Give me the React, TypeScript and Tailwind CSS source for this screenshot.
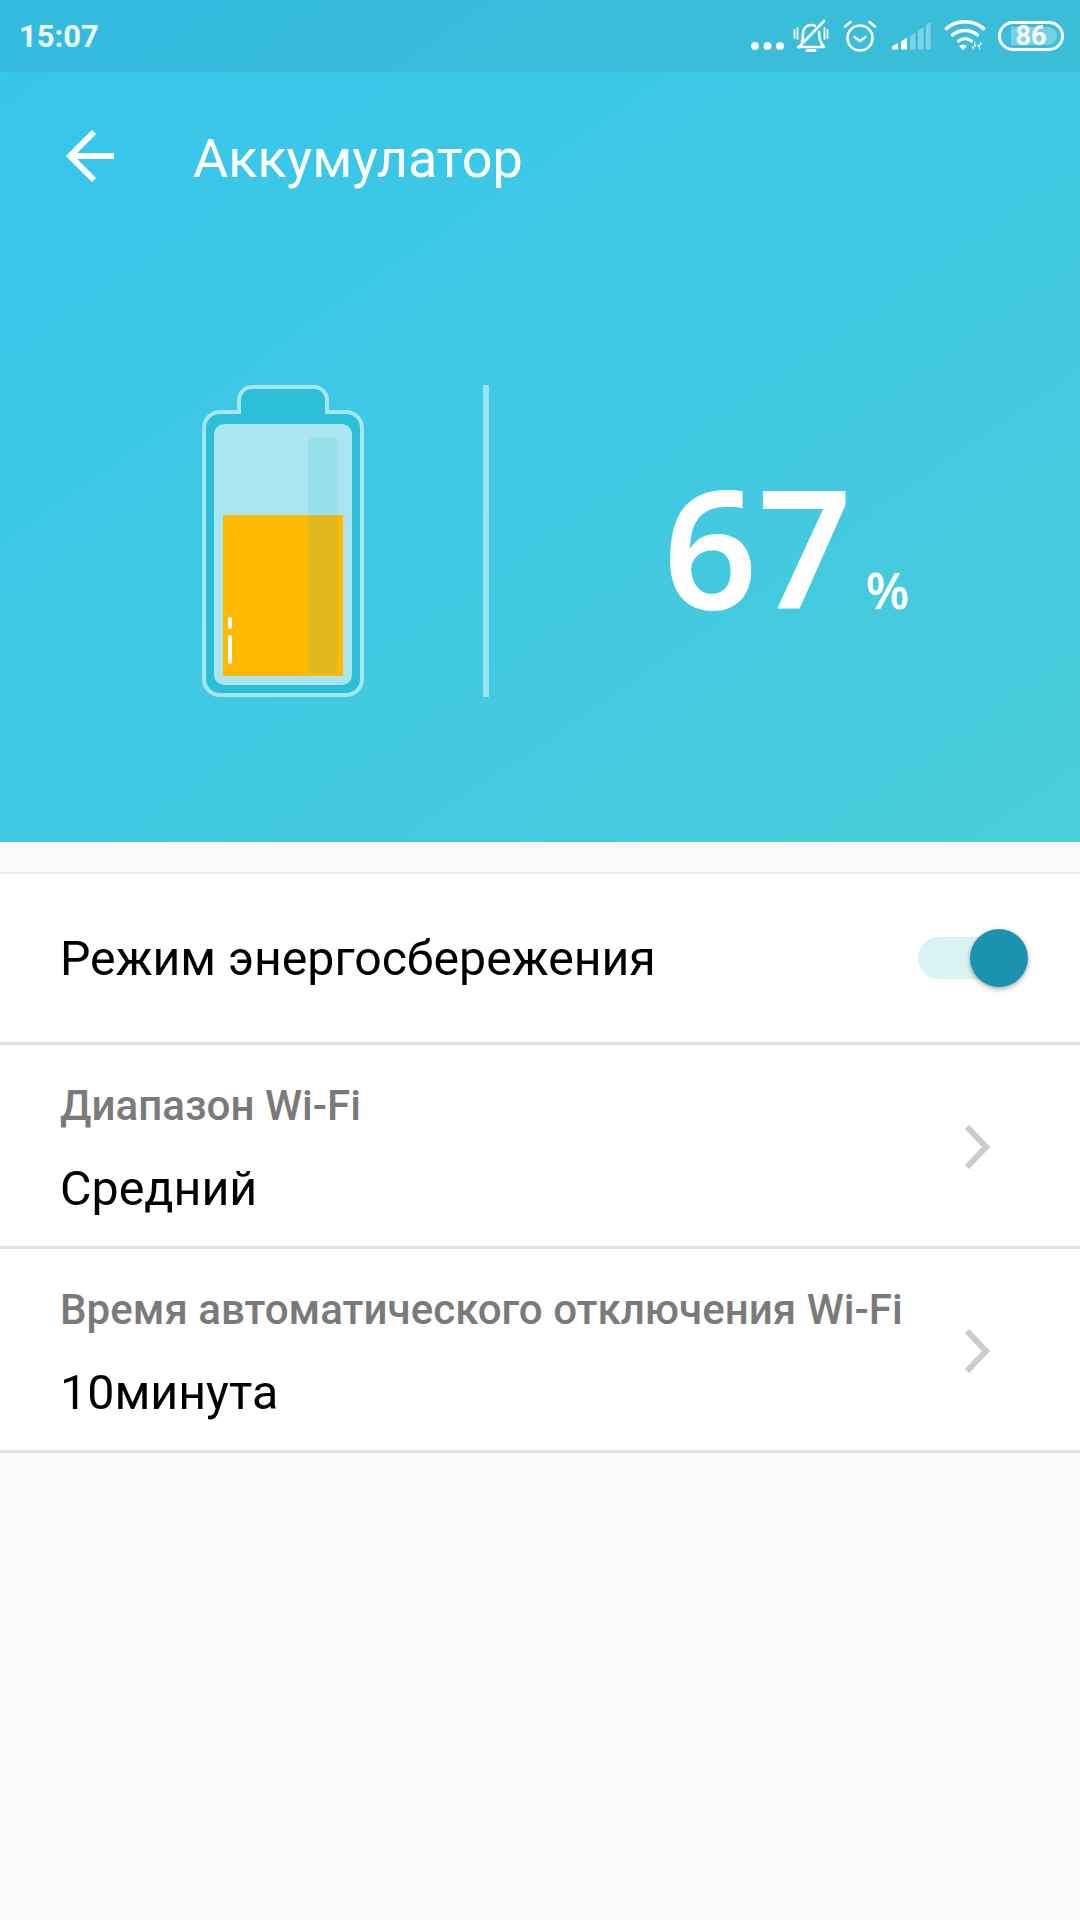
export default function App() {
  const f = { fontFamily: 'Roboto, sans-serif' };
  return (
    <div className="w-[1080px] h-[1920px] bg-[#fafafa] overflow-hidden font-['Roboto',sans-serif]" style={f}>
      <div className="h-[842px] bg-[linear-gradient(145deg,#36c5ec_0%,#3fc9e4_50%,#4bccd9_100%)]">
        <div className="h-[72px] bg-black/[0.05] flex items-center text-white">
          <span className="ml-[19px] text-[31px] font-bold leading-none text-white/90 mt-[1px]">15:07</span>
          <div className="ml-auto mr-[16px] h-[72px] flex items-center">
            <svg width="34" height="16" viewBox="0 0 34 16" className="mt-[19px] mr-[8px]">
              <circle cx="4" cy="8" r="4" fill="#fff" opacity="0.95" />
              <circle cx="16.5" cy="8" r="4" fill="#fff" opacity="0.95" />
              <circle cx="29" cy="8" r="4" fill="#fff" opacity="0.95" />
            </svg>
            <svg width="36" height="34" viewBox="0 0 36 34" fill="none" stroke="#fff" strokeWidth="2.6" strokeLinecap="round" strokeLinejoin="round" className="mr-[13px]">
              <path d="M6 28l25-26" />
              <path d="M9 23c1-3 1-6 1-9 0-5 4-8 8-8 2 0 3 0 4 1M26 13c0 4 1 11 5 15H5" />
              <path d="M14 31.5h8" strokeWidth="2.8" />
              <path d="M1.500 11v8M4.500 9v11M31.500 9v11M34.500 11v8" strokeWidth="1.800" />
            </svg>
            <svg width="36" height="34" viewBox="0 0 36 34" fill="none" stroke="#fff" strokeWidth="2.6" strokeLinecap="round" strokeLinejoin="round" className="mr-[13px]">
              <circle cx="18" cy="19" r="12.5" />
              <path d="M12.5 18l5.5 4 5.5-4" />
              <path d="M3 7.5l5.5-4.500M33 7.5l-5.5-4.500" />
            </svg>
            <svg width="40" height="28" viewBox="0 0 40 28" className="mr-[13px]">
              <path d="M1 27.500v-3l6-3.500v6.500z" fill="#fff" />
              <path d="M10 27.500v-8l6-4v12z" fill="#fff" />
              <path d="M19 27.500v-13l5.500-4v17z" fill="#fff" opacity="0.35" />
              <path d="M27 27.500v-19l5.500-3v22z" fill="#fff" opacity="0.35" />
              <path d="M35 27.500v-25l4.500-2v27z" fill="#fff" opacity="0.35" />
            </svg>
            <svg width="42" height="32" viewBox="0 0 42 32" fill="none" stroke="#fff" className="mr-[12px]">
              <path d="M2.500 8.500c10-9 26-9 37 0" strokeWidth="3.600" strokeLinecap="round" />
              <path d="M8.500 15c7-6 18-6 25 0" strokeWidth="3.400" strokeLinecap="round" />
              <path d="M14.500 21c4-3 9-3 13 0" strokeWidth="3.200" strokeLinecap="round" />
              <path d="M15 26c2.500-2 5.500-2 8 0l-4 4z" fill="#fff" stroke="none" />
              <path d="M30 21v9l-2.500-3h5zM36 31v-9l2.500 3h-5z" fill="#fff" stroke="none" transform="translate(0 -0.5)" />
            </svg>
            <div className="relative w-[66px] h-[30px] border-[3px] border-white rounded-full flex items-center justify-center">
              <div className="absolute left-[10px] top-[3px] bottom-[3px] right-[4px] rounded-r-full bg-white/30" />
              <span className="relative text-[27px] font-bold leading-none text-white">86</span>
            </div>
          </div>
        </div>
        <div className="h-[174px] flex items-start">
          <svg width="50" height="54" viewBox="0 0 50 54" fill="none" stroke="#fff" strokeWidth="6" className="ml-[66px] mt-[57px]">
            <path d="M28 3L4 27l24 24M4 27h44" />
          </svg>
          <span className="ml-[77px] mt-[52px] text-[54px] leading-[70px] text-white">Аккумулатор</span>
        </div>
        <div className="flex items-start pt-[139px]">
          <svg width="162" height="312" viewBox="0 0 162 312" className="ml-[202px]">
            <path d="M2 43a16 16 0 0 1 16-16h19V15a13 13 0 0 1 13-13h62a13 13 0 0 1 13 13v12h19a16 16 0 0 1 16 16v251a16 16 0 0 1-16 16H18a16 16 0 0 1-16-16z" fill="#2dbfda" stroke="#a6e6ef" strokeWidth="4" />
            <rect x="12" y="39" width="138" height="261" rx="10" fill="#a9e6ef" />
            <rect x="21" y="130" width="120" height="161" fill="#ffb900" />
            <rect x="106" y="52" width="29.500" height="237" rx="6" fill="#2dbfda" opacity="0.14" />
            <rect x="26" y="232" width="4" height="12" rx="2" fill="#fff" />
            <rect x="26" y="250" width="4" height="29" rx="2" fill="#fff" />
          </svg>
          <div className="ml-[119px] w-[6px] h-[312px] bg-[#9be3ee]" />
          <div className="ml-[174px] mt-[60px] flex items-baseline text-white font-['Noto_Sans',sans-serif]">
            <span className="text-[165px] font-semibold leading-[200px]">67</span>
            <span className="ml-[14px] text-[50px] font-semibold leading-none">%</span>
          </div>
        </div>
      </div>
      <div className="h-[30px]" />
      <div className="h-[2px] bg-[#f0f0f0]" />
      <div className="bg-white">
        <div className="h-[168px] flex items-center pl-[60px] pr-[52px] border-b-[3px] border-[#e2e2e2] box-content">
          <span className="text-[48.2px] leading-none text-black mt-[3px]">Режим энергосбережения</span>
          <div className="ml-auto relative w-[110px] h-[42px]">
            <div className="absolute left-0 top-0 w-[90px] h-[42px] rounded-full bg-[#d9f3f5]" />
            <div className="absolute left-[52px] top-[-8px] w-[58px] h-[58px] rounded-full bg-[#1c93ae] shadow-[0_2px_5px_rgba(0,0,0,0.35)]" />
          </div>
        </div>
        <Row label="Диапазон Wi-Fi" value="Средний" />
        <Row label="Время автоматического отключения Wi-Fi" value="10минута" />
      </div>
    </div>
  );
}

function Row({ label, value }: { label: string; value: string }) {
  return (
    <div className="h-[201px] box-content border-b-[3px] border-[#e2e2e2] flex items-center pl-[60px] pr-[90px]">
      <div className="flex flex-col">
        <span className="text-[42.1px] font-medium leading-[50px] text-[#7a7a7a] mt-[8px]">{label}</span>
        <span className="text-[48.4px] leading-[60px] mt-[28px] text-black">{value}</span>
      </div>
      <svg width="27" height="44" viewBox="0 0 27 44" fill="none" stroke="#cccccc" strokeWidth="6" className="ml-auto mt-[2px]">
        <path d="M4 2l19 20L4 42" />
      </svg>
    </div>
  );
}
